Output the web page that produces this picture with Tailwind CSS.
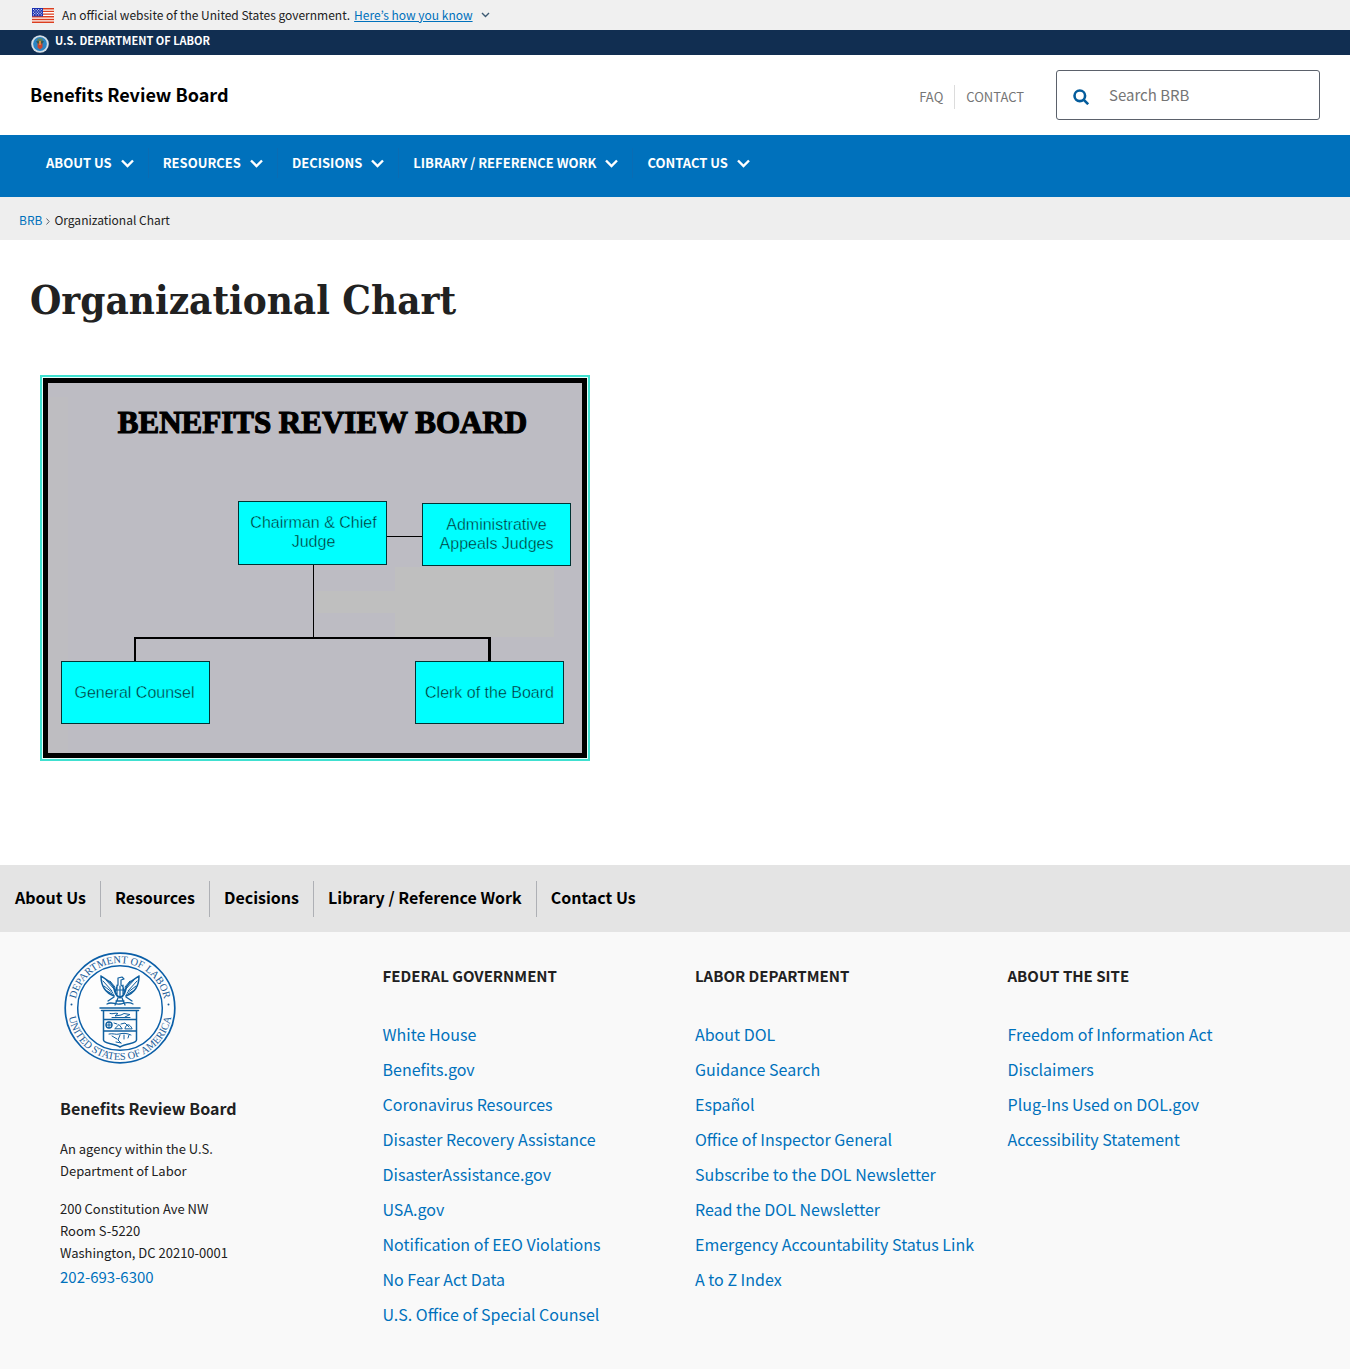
<!DOCTYPE html>
<html lang="en">
<head>
<meta charset="utf-8">
<meta name="viewport" content="width=device-width, initial-scale=1">
<title>Organizational Chart | Benefits Review Board</title>
<script src="https://cdn.jsdelivr.net/npm/@tailwindcss/browser@4"></script>
</head>
<body class="min-h-screen flex flex-col bg-white font-['Noto_Sans_CJK_KR',sans-serif] text-[15px] text-[#212121]">

<div class="h-[30px] bg-[#f0f0f0] flex items-center pl-8 text-xs">
  <svg class="w-[22px] h-[15px]" viewBox="0 0 22 15" aria-hidden="true">
    <rect width="22" height="15" fill="#fff"/>
    <path d="M0 .7h22M0 3.4h22M0 6.1h22M0 8.8h22M0 11.5h22M0 14.2h22" stroke="#db3e1f" stroke-width="1.4"/>
    <rect width="11" height="8.4" fill="#1e33b1"/>
    <path d="M1 1.5h10M1 4.2h10M1 6.9h10" stroke="#fff" stroke-width=".9" stroke-dasharray="1 1.6"/>
    <path d="M2.3 2.8h8M2.3 5.5h8" stroke="#fff" stroke-width=".9" stroke-dasharray="1 1.6"/>
  </svg>
  <p class="ml-2">An official website of the United States government.</p>
  <button type="button" class="ml-1 flex items-center gap-2 text-[#0071bc]">
    <span class="underline">Here’s how you know</span>
    <svg class="w-[9px] h-[6px]" viewBox="0 0 9 6" fill="none" stroke="#3d5a73" stroke-width="1.4" aria-hidden="true"><path d="M1 1l3.500 3.500L8 1"/></svg>
  </button>
</div>

<div class="h-[25px] bg-[#112e51] flex items-center pl-[31px]">
  <a href="#" class="flex items-start gap-1.5 text-white text-[11px] leading-4 font-bold">
    <svg class="w-[18px] h-[18px] mt-[3px]" viewBox="0 0 18 18" aria-hidden="true">
      <circle cx="9" cy="9" r="8.800" fill="#d5dee5"/>
      <circle cx="9" cy="9" r="6.900" fill="#2a84c4"/>
      <path d="M6.500 3.500h5v3h-5z" fill="#5c7f5d"/>
      <path d="M5 6.500l2-1 2 2 2-2 2 1-2 2.500H7z" fill="#3c5b52"/>
      <path d="M6.500 8.500h5v4L9 14.500l-2.500-2z" fill="#c8452f"/>
      <path d="M8 6h2v4H8z" fill="#d8893b"/>
    </svg>
    <span>U.S. DEPARTMENT OF LABOR</span>
  </a>
</div>

<header class="h-20 flex items-center justify-between px-[30px]">
  <a href="#" class="pb-0.5 text-lg font-bold text-black">Benefits Review Board</a>
  <div class="flex items-center">
    <nav class="flex items-center pt-1 text-[13px] text-[#757575] mr-8" aria-label="Secondary">
      <a href="#" class="pr-[11px] border-r border-[#dcdcdc] leading-6">FAQ</a>
      <a href="#" class="pl-[11px] leading-6">CONTACT</a>
    </nav>
    <form class="w-[264px] h-[50px] border border-[#5b616b] rounded-[3px] flex items-center pl-4" role="search">
      <button type="submit" aria-label="Search">
        <svg class="w-4 h-4 mt-1" viewBox="0 0 16 16" fill="none" stroke="#045c9c" stroke-width="2.600" aria-hidden="true"><circle cx="6.800" cy="6.800" r="5.300"/><path d="M10.800 10.800l4.400 4.400"/></svg>
      </button>
      <input type="text" aria-label="Search BRB" placeholder="Search BRB" class="ml-5 w-full min-w-0 outline-none placeholder:text-[#757575]">
    </form>
  </div>
</header>

<nav class="h-[62px] bg-[#0071bc] pl-8 pt-[13px] text-[13px] font-bold text-white" aria-label="Main">
  <ul class="flex leading-[30px]">
    <li><button type="button" class="flex items-center gap-[9px] px-[14px] border-r border-[#0a6cb3]">ABOUT US<svg class="w-[13px] h-[9px]" viewBox="0 0 13 9" fill="none" stroke="#fff" stroke-width="2.400" aria-hidden="true"><path d="M1 1.500l5.500 5.500L12 1.500"/></svg></button></li>
    <li><button type="button" class="flex items-center gap-[9px] px-[14px] border-r border-[#0a6cb3]">RESOURCES<svg class="w-[13px] h-[9px]" viewBox="0 0 13 9" fill="none" stroke="#fff" stroke-width="2.400" aria-hidden="true"><path d="M1 1.500l5.500 5.500L12 1.500"/></svg></button></li>
    <li><button type="button" class="flex items-center gap-[9px] px-[14px] border-r border-[#0a6cb3]">DECISIONS<svg class="w-[13px] h-[9px]" viewBox="0 0 13 9" fill="none" stroke="#fff" stroke-width="2.400" aria-hidden="true"><path d="M1 1.500l5.500 5.500L12 1.500"/></svg></button></li>
    <li><button type="button" class="flex items-center gap-[9px] px-[14px] border-r border-[#0a6cb3]">LIBRARY / REFERENCE WORK<svg class="w-[13px] h-[9px]" viewBox="0 0 13 9" fill="none" stroke="#fff" stroke-width="2.400" aria-hidden="true"><path d="M1 1.500l5.500 5.500L12 1.500"/></svg></button></li>
    <li><button type="button" class="flex items-center gap-[9px] px-[14px]">CONTACT US<svg class="w-[13px] h-[9px]" viewBox="0 0 13 9" fill="none" stroke="#fff" stroke-width="2.400" aria-hidden="true"><path d="M1 1.500l5.500 5.500L12 1.500"/></svg></button></li>
  </ul>
</nav>

<nav class="h-[43px] bg-[#eee] pl-[19px] pt-0.5 flex items-center text-xs" aria-label="Breadcrumb">
  <a href="#" class="text-[#0071bc]">BRB</a>
  <svg class="w-[4px] h-[7px] mx-1 mt-1" viewBox="0 0 4 7" fill="none" stroke="#5b616b" aria-hidden="true"><path d="M.5 .5l2.700 3L.5 6.500"/></svg>
  <span>Organizational Chart</span>
</nav>

<main class="grow px-[30px] pb-[104px]">
  <h1 class="pt-[30px] text-[40px] leading-[60px] font-bold font-['DejaVu_Serif_Condensed','DejaVu_Serif',serif]">Organizational Chart</h1>
  <svg class="block mt-[45px] ml-2.5 w-[550px] h-[386px] font-['Liberation_Sans',sans-serif] text-base" viewBox="0 0 550 386" role="img" aria-label="Benefits Review Board organizational chart">
    <rect width="550" height="386" fill="#40e0d0"/>
    <rect x="2" y="2" width="546" height="382" fill="#e8fffc"/>
    <rect x="3" y="3" width="544" height="380" fill="#000"/>
    <rect x="8" y="8" width="534" height="370" fill="#bdbcc3"/>
    <rect x="8" y="22" width="20" height="356" fill="#bebdc1"/>
    <path d="M276 216h79v-24h159v70H355v-24h-79z" fill="#bfbfbf"/>
    <text x="282.500" y="58" text-anchor="middle" class="font-['Liberation_Serif',serif] text-[31px] font-bold" stroke="#000" stroke-width="1.200">BENEFITS REVIEW BOARD</text>
    <path d="M347 161.500h35M273.500 190v72" stroke="#000" fill="none"/>
    <path d="M95 286v-23h354" stroke="#000" stroke-width="2" fill="none"/>
    <path d="M449.500 262v24" stroke="#000" stroke-width="3"/>
    <g fill="#0ff" stroke="#033">
      <rect x="198.500" y="126.500" width="148" height="63"/>
      <rect x="382.500" y="128.500" width="148" height="62"/>
      <rect x="21.500" y="286.500" width="148" height="62"/>
      <rect x="375.500" y="286.500" width="148" height="62"/>
    </g>
    <g fill="#022" stroke="#0ff" stroke-width=".4" text-anchor="middle">
      <text x="273.500" y="153">Chairman &amp; Chief</text>
      <text x="273.500" y="172">Judge</text>
      <text x="456.500" y="155">Administrative</text>
      <text x="456.500" y="174">Appeals Judges</text>
      <text x="94.500" y="323">General Counsel</text>
      <text x="449.500" y="323">Clerk of the Board</text>
    </g>
  </svg>
</main>

<nav class="h-[67px] bg-[#e4e4e4] pl-px flex items-center text-base font-bold text-black" aria-label="Footer">
  <a href="#" class="px-[14px] pt-1 pb-2 border-r border-[#aeb0b5]">About Us</a>
  <a href="#" class="px-[14px] pt-1 pb-2 border-r border-[#aeb0b5]">Resources</a>
  <a href="#" class="px-[14px] pt-1 pb-2 border-r border-[#aeb0b5]">Decisions</a>
  <a href="#" class="px-[14px] pt-1 pb-2 border-r border-[#aeb0b5]">Library / Reference Work</a>
  <a href="#" class="px-[14px] pt-1 pb-2">Contact Us</a>
</nav>

<footer class="bg-[#f9f9f9] grid grid-cols-4 px-[50px] pt-5 pb-[43px] leading-[23px]">
  <div class="pl-2.5">
    <svg class="w-[112px] h-[112px] ml-1 font-['Liberation_Serif',serif]" viewBox="0 0 112 112" role="img" aria-label="Department of Labor seal">
      <circle cx="56" cy="56" r="54.800" fill="#fdfdfd" stroke="#0b5fa8" stroke-width="1.700"/>
      <circle cx="56" cy="56" r="42.300" fill="none" stroke="#0b5fa8" stroke-width="1.500"/>
      <path id="seal-top" d="M11 56a45 45 0 0 1 90 0" fill="none"/>
      <path id="seal-bottom" d="M4 56a52 52 0 0 0 104 0" fill="none"/>
      <text fill="#1a5c98" font-size="10.500"><textPath href="#seal-top" startOffset="50%" text-anchor="middle">DEPARTMENT OF LABOR</textPath></text>
      <text fill="#1a5c98" font-size="10.500"><textPath href="#seal-bottom" startOffset="50%" text-anchor="middle">UNITED STATES OF AMERICA</textPath></text>
      <circle cx="7.500" cy="52.500" r="1" fill="#1a5c98"/><circle cx="104.500" cy="52.500" r="1" fill="#1a5c98"/>
      <g fill="none" stroke="#0f5f9f" stroke-linejoin="round" stroke-linecap="round">
        <path d="M37 24c0 11 5 17 13 20M37 24c6 4 12 7 14 15M75 24c0 11-5 17-13 20M75 24c-6 4-12 7-14 15" stroke-width="1.500"/>
        <path d="M39 29l9 10M40 34l9 7M43 39l7 4M42 28l8 9M73 29l-9 10M72 34l-9 7M69 39l-7 4M70 28l-8 9M46 29l5 6M66 29l-5 6" stroke-width="1"/>
        <path d="M54 26l4-1 2 2-3 1v5c3 2 4 6 3 9l-4 4-4-4c-1-3 0-7 2-9zM50 35c0 5 2 10 6 11 4-1 6-6 6-11M53 33v9M56 34v11M59 33v9M51 38h10" stroke-width="1.200"/>
        <path d="M50 45l-6 4M62 45l6 4M54 46l-3 7M58 46l3 7M43 52c5-3 8 1 13 0s8-3 13 0M52 49h8" stroke-width="1.300"/>
        <path d="M36 56h40M37.500 58.500h37" stroke-width="1.500"/>
        <path d="M39.500 59v29c0 4 10 3 16.500 7 6.500-4 16.500-3 16.500-7V59M40 67.500h32M40 79h32" stroke-width="1.500"/>
        <path d="M46 61.500c3 1 5-1 8 0l-3 2.500 6-1 3-1.500 6 1-5 2.500M48 65.500h18" stroke-width="1"/>
        <circle cx="45" cy="73" r="3" stroke-width="1.300"/>
        <path d="M42 73h6M45 70v6M51 76.500l4-4 3 4zM57 72l4-1 4 4M61 76.500c1-5 5-5 7 0zM50 71l3 1" stroke-width="1"/>
        <path d="M45 82c4-1 7 1 10 0 4-1 8-1 12 1M48 84l5 3M56 83l-2 5 3 3M60 83v4M65 83l-1 3M52 90l5 1" stroke-width="1"/>
      </g>
    </svg>
    <h2 class="mt-[33px] font-bold text-base leading-[23px]">Benefits Review Board</h2>
    <p class="mt-[18px] text-[13px] leading-[22px]">An agency within the U.S.<br>Department of Labor</p>
    <address class="mt-4 not-italic text-[13px] leading-[22px]">200 Constitution Ave NW<br>Room S-5220<br>Washington, DC 20210-0001<br><a href="#" class="text-[15px] leading-[26px] text-[#0071bc]">202-693-6300</a></address>
  </div>
  <section class="pl-5 pt-3">
    <h3 class="text-[15px] leading-[23px] font-bold">FEDERAL GOVERNMENT</h3>
    <ul class="mt-9 flex flex-col gap-3 text-base leading-[23px] text-[#0071bc]">
      <li><a href="#">White House</a></li>
      <li><a href="#">Benefits.gov</a></li>
      <li><a href="#">Coronavirus Resources</a></li>
      <li><a href="#">Disaster Recovery Assistance</a></li>
      <li><a href="#">DisasterAssistance.gov</a></li>
      <li><a href="#">USA.gov</a></li>
      <li><a href="#">Notification of EEO Violations</a></li>
      <li><a href="#">No Fear Act Data</a></li>
      <li><a href="#">U.S. Office of Special Counsel</a></li>
    </ul>
  </section>
  <section class="pl-5 pt-3">
    <h3 class="text-[15px] leading-[23px] font-bold">LABOR DEPARTMENT</h3>
    <ul class="mt-9 flex flex-col gap-3 text-base leading-[23px] text-[#0071bc]">
      <li><a href="#">About DOL</a></li>
      <li><a href="#">Guidance Search</a></li>
      <li><a href="#">Español</a></li>
      <li><a href="#">Office of Inspector General</a></li>
      <li><a href="#">Subscribe to the DOL Newsletter</a></li>
      <li><a href="#">Read the DOL Newsletter</a></li>
      <li><a href="#">Emergency Accountability Status Link</a></li>
      <li><a href="#">A to Z Index</a></li>
    </ul>
  </section>
  <section class="pl-5 pt-3">
    <h3 class="text-[15px] leading-[23px] font-bold">ABOUT THE SITE</h3>
    <ul class="mt-9 flex flex-col gap-3 text-base leading-[23px] text-[#0071bc]">
      <li><a href="#">Freedom of Information Act</a></li>
      <li><a href="#">Disclaimers</a></li>
      <li><a href="#">Plug-Ins Used on DOL.gov</a></li>
      <li><a href="#">Accessibility Statement</a></li>
    </ul>
  </section>
</footer>
</body>
</html>
